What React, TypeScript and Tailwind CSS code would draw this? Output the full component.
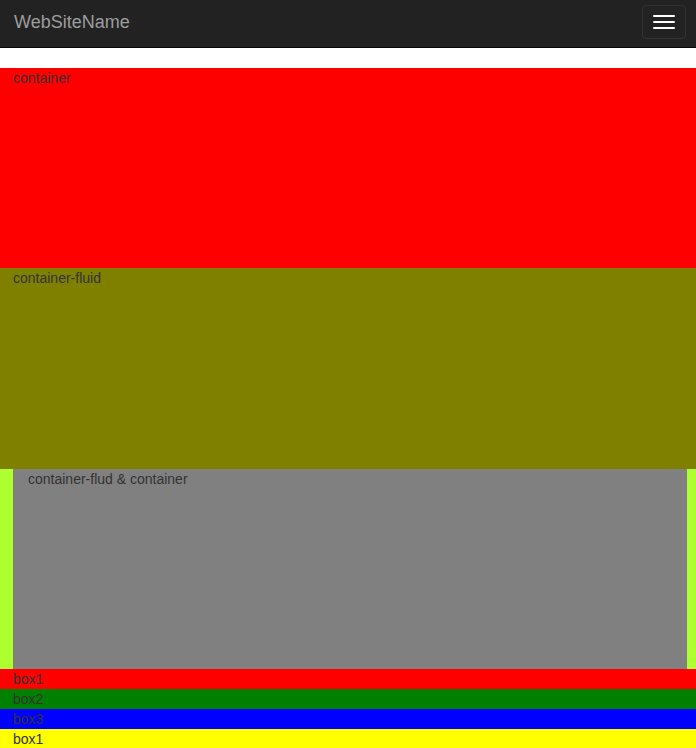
export default function App() {
  return (
    <div className="min-h-screen bg-white text-[14px] leading-[20px] text-[#333]" style={{ fontFamily: '"Liberation Sans", Arial, sans-serif' }}>
      {/* navbar */}
      <nav className="flex h-[48px] items-start justify-between border-b border-[#080808] bg-[#222]">
        <div className="pl-[14px] pt-[12px] text-[18px] leading-[20px] text-[#9d9d9d]">WebSiteName</div>
        <button className="mr-[10px] mt-[5px] flex h-[34px] w-[44px] flex-col items-center justify-center gap-[4px] rounded-[4px] border border-[#333]">
          <span className="block h-[2px] w-[22px] rounded-[1px] bg-white" />
          <span className="block h-[2px] w-[22px] rounded-[1px] bg-white" />
          <span className="block h-[2px] w-[22px] rounded-[1px] bg-white" />
        </button>
      </nav>

      <div className="mt-[20px] h-[200px] bg-[#ff0000] pl-[13px]">container</div>
      <div className="h-[201px] bg-[#808000] pl-[13px]">container-fluid</div>
      <div className="bg-[#adff2f] pl-[13px] pr-[9px]">
        <div className="h-[200px] bg-[#808080] pl-[15px]">container-flud &amp; container</div>
      </div>

      <div className="h-[20px] bg-[#ff0000] pl-[13px]">box1</div>
      <div className="h-[20px] bg-[#008000] pl-[13px]">box2</div>
      <div className="h-[20px] bg-[#0000ff] pl-[13px]">box3</div>
      <div className="h-[20px] bg-[#ffff00] pl-[13px]">box1</div>
    </div>
  )
}
